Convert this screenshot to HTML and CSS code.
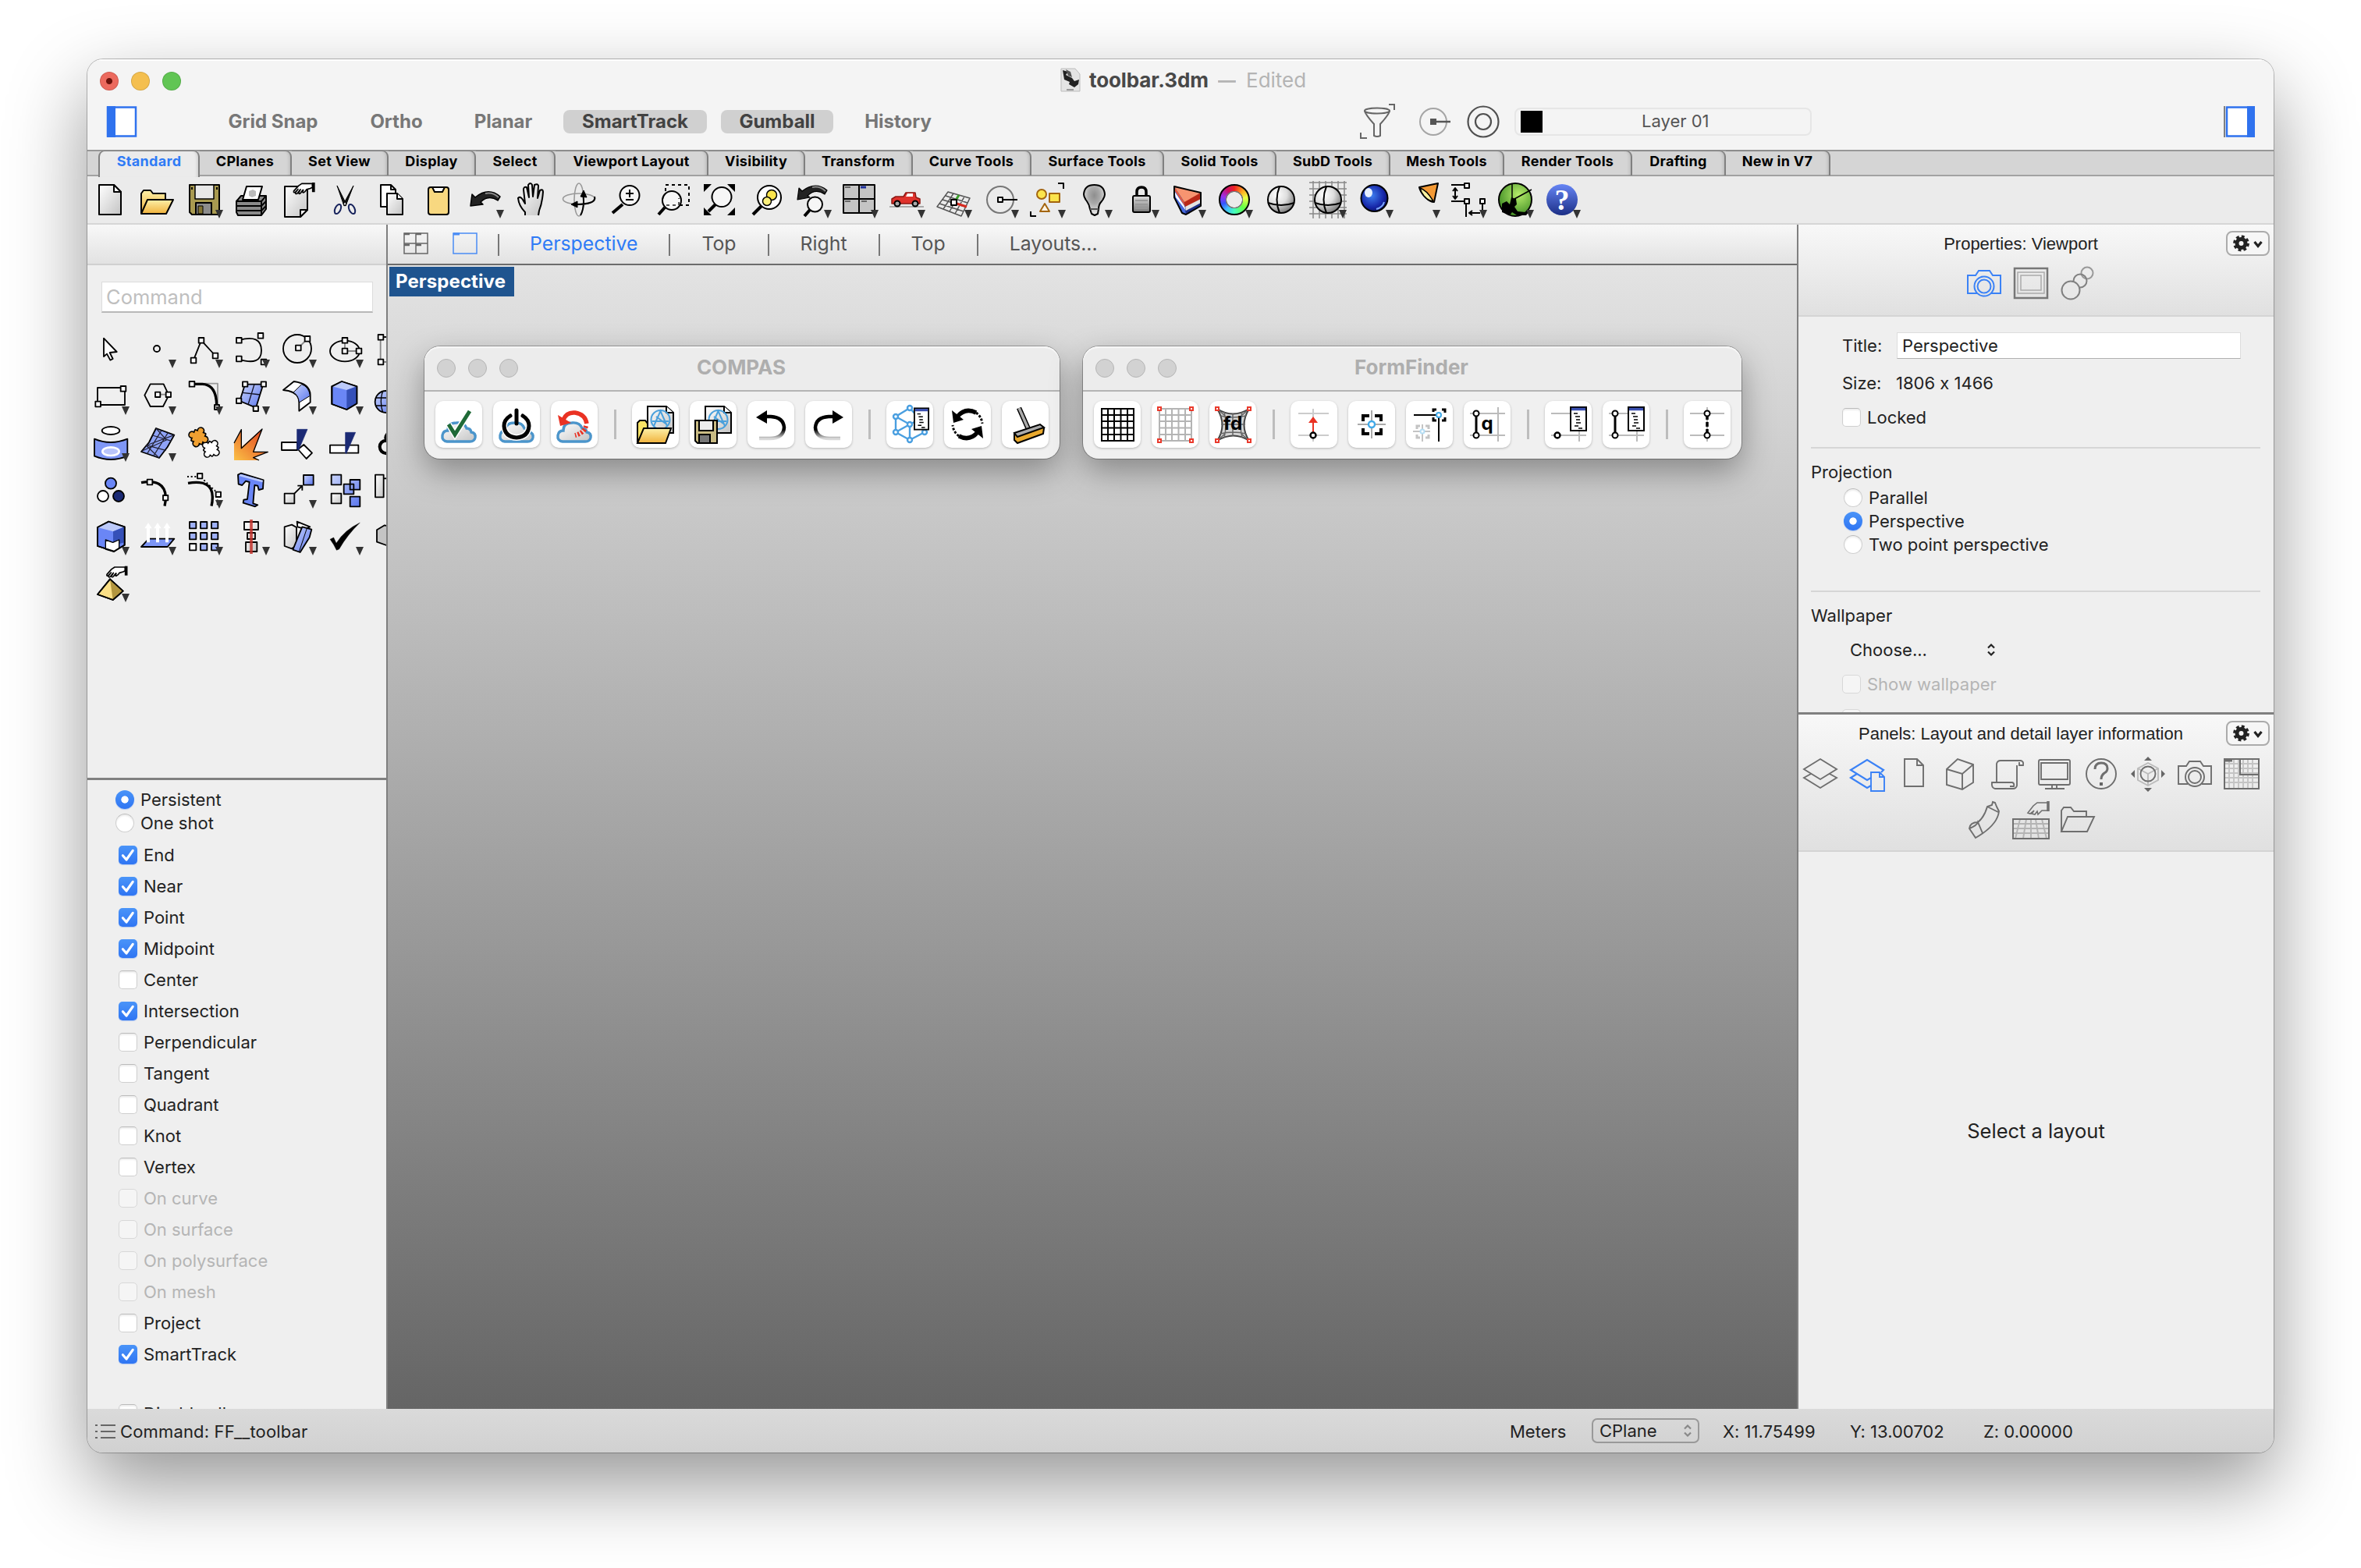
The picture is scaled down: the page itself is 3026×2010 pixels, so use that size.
FILE: index.html
```html
<!DOCTYPE html>
<html lang="en">
<head>
<meta charset="utf-8">
<title>toolbar.3dm</title>
<link rel="stylesheet" href="styles.css">
</head>
<body>
<svg class="defs" width="0" height="0" aria-hidden="true">
  <defs>
    <linearGradient id="paper" x1="0" y1="0" x2="1" y2="1"><stop offset="0" stop-color="#fff"/><stop offset="1" stop-color="#c4c4c4"/></linearGradient>
    <linearGradient id="gold" x1="0" y1="0" x2="0" y2="1"><stop offset="0" stop-color="#fdf0a8"/><stop offset="1" stop-color="#f0b23c"/></linearGradient>
    <linearGradient id="blue" x1="0" y1="0" x2="1" y2="1"><stop offset="0" stop-color="#c9d4fb"/><stop offset="1" stop-color="#5a76ee"/></linearGradient>
    <linearGradient id="fire" x1="1" y1="0" x2="0" y2="1"><stop offset="0" stop-color="#e03a1e"/><stop offset="1" stop-color="#fbc146"/></linearGradient>
    <linearGradient id="steel" x1="0" y1="0" x2="0" y2="1"><stop offset="0" stop-color="#ddd"/><stop offset="1" stop-color="#777"/></linearGradient>
    <linearGradient id="helpfill" x1="0" y1="0" x2="0" y2="1"><stop offset="0" stop-color="#6685f5"/><stop offset="1" stop-color="#1c2f86"/></linearGradient>
    <linearGradient id="fade" x1="0" y1="0" x2="0" y2="1"><stop offset=".6" stop-color="#000"/><stop offset="1" stop-color="#000" stop-opacity=".15"/></linearGradient>
    <radialGradient id="ball" cx=".35" cy=".3" r=".75"><stop offset="0" stop-color="#fff"/><stop offset=".5" stop-color="#ddd"/><stop offset="1" stop-color="#777"/></radialGradient>
    <radialGradient id="bulb" cx=".5" cy=".35" r=".6"><stop offset="0" stop-color="#8e8e8e"/><stop offset=".45" stop-color="#a9a9a9"/><stop offset="1" stop-color="#e8e8e8"/></radialGradient>
    <radialGradient id="blueball" cx=".4" cy=".4" r=".65"><stop offset="0" stop-color="#3f7ff0"/><stop offset=".7" stop-color="#1626a8"/><stop offset="1" stop-color="#0b1263"/></radialGradient>
    <radialGradient id="greenball" cx=".6" cy=".35" r=".7"><stop offset="0" stop-color="#b6ec6a"/><stop offset="1" stop-color="#3c8a22"/></radialGradient>
    <symbol id="check" viewBox="0 0 24 24"><path d="M5.4 12.8 10 18 18.2 6.4" fill="none" stroke="#fff" stroke-width="3.2" stroke-linecap="round" stroke-linejoin="round"/></symbol>
    <symbol id="gear" viewBox="2 2 52 28"><g fill="none" stroke="#222"><circle cx="19.500" cy="16" r="5.500" stroke-width="5"/><circle cx="19.500" cy="16" r="8.400" stroke-width="4" stroke-dasharray="3.700 2.900"/><path d="m36.500 14 4.500 5.500 4.500-5.500" stroke-width="3.200"/></g></symbol>
    <symbol id="updown" viewBox="0 0 12 18"><path d="m2 6.500 4-4 4 4m-8 5 4 4 4-4" fill="none" stroke="currentColor" stroke-width="2.200"/></symbol>
    <symbol id="hand" viewBox="0 0 84 44" overflow="visible"><path d="M74 4 34 4 22 12 4 32q-2 8 6 4l10-11-10 13q0 7 7 3l12-15-7 13q2 6 7 1l9-12 2 0q-6 10 0 10 8-4 12-12l14-4 8-4V4z" fill="#fff" stroke="#000" stroke-width="5" stroke-linejoin="round"/><path d="M78 0v36" stroke="#000" stroke-width="11"/></symbol>
    <symbol id="cloud" viewBox="0 0 46 28" overflow="visible"><path d="M8 26Q1 25 2 18 3 12 9 12 9 2 20 2 30 1 33 9q5 0 6 5 6 1 5 7-1 5-7 5z" fill="url(#paper)" stroke="#4b95cb" stroke-width="3.400"/></symbol>
    <symbol id="sheet" viewBox="0 0 36 36" overflow="visible"><path d="M1 1h24l9 8v26H1z" fill="url(#paper)" stroke="#000" stroke-width="2"/><path d="M25 1v8h9" fill="#fff" stroke="#000" stroke-width="2"/><g fill="none" stroke="#4aa0dc" stroke-width="2"><circle cx="17.500" cy="18" r="12"/><path d="M9 26l8.500-19L26 26M7 20h21M12 14l12 9"/></g></symbol>
    <symbol id="list" viewBox="0 0 22 32" overflow="visible"><rect x="1" y="1" width="20" height="30" fill="#fff" stroke="#000" stroke-width="2"/><path d="M2 3.500h18" stroke="#3a4fb0" stroke-width="3.500"/><path d="M5 9h5M7 13h6M8 17h5M8 21h6M6 25h5M11 28h5" stroke="#000" stroke-width="1.600"/></symbol>
    <symbol id="camera" viewBox="0 0 44 36"><g fill="none" stroke="currentColor" stroke-width="2"><path d="M13 31H1V8h10l4-6h14l4 6h10v23H31"/><circle cx="22" cy="22" r="12.500"/><circle cx="22" cy="22" r="8.500"/></g></symbol>
    <g id="jigsaw"><rect x="-20" y="-20" width="40" height="40"/><circle cx="0" cy="-26" r="10"/><circle cx="-26" cy="0" r="10"/><circle cx="0" cy="26" r="10"/><circle cx="26" cy="0" r="10"/></g>
  </defs>
</svg>

<div class="window">
  <header class="titlebar">
    <div class="titlerow">
      <div class="lights"><i class="red"></i><i class="amber"></i><i class="green"></i></div>
      <div class="doctitle">
        <svg width="26" height="31" viewBox="0 0 26 31"><path d="M1 1h18l6 7v22H1z" fill="#e4e4e4" stroke="#bbb"/><path d="M3 3l7 2-3 4 8 4 3 4 6-2-1 6-5 4-7-4 1-3-7-3z" fill="#222"/><path d="M7 2l3 8 5 2-2-7z" fill="#555"/><path d="M8 28h9" stroke="#999" stroke-width="2"/></svg>
        <b>toolbar.3dm</b><span class="dash">—</span><span class="edited">Edited</span>
      </div>
    </div>
    <div class="modes">
      <svg class="side" width="40" height="40"><path d="M2 1.500h36v37H2z" fill="#fff" stroke="#2f72ee" stroke-width="2.500"/><path d="M1 0h11v40H1z" fill="#2f72ee"/></svg>
      <nav class="modebtns"><span>Grid Snap</span><span>Ortho</span><span>Planar</span><span class="on">SmartTrack</span><span class="on">Gumball</span><span>History</span></nav>
      <div class="filters">
        <svg width="46" height="46" fill="none" stroke="#666" stroke-width="2"><path d="M37 1h7v7M1 37v7h8"/><ellipse cx="22" cy="9" rx="16" ry="3.500"/><path d="M6 9q1 5 12 17v15q4 2 8 0V26Q37 14 38 9"/></svg>
        <svg width="42" height="42" fill="none"><circle cx="19" cy="21" r="17" stroke="#a5a5a5" stroke-width="2"/><path d="M19 21h22" stroke="#555" stroke-width="2.500"/><path d="M15 17h8v8h-8z" fill="#555"/></svg>
        <svg width="42" height="42" fill="none" stroke="#505050" stroke-width="2.200"><circle cx="21" cy="21" r="19.500"/><circle cx="21" cy="21" r="10"/></svg>
      </div>
      <div class="layerbox"><i></i><span>Layer 01</span></div>
      <svg class="side right" width="40" height="40"><path d="M2 1.500h36v37H2z" fill="#fff" stroke="#2f72ee" stroke-width="2.500"/><path d="M28 0h12v40H28z" fill="#2f72ee"/></svg>
    </div>
  </header>

  <nav class="tabs">
    <span class="active">Standard</span><span>CPlanes</span><span>Set View</span><span>Display</span><span>Select</span><span>Viewport Layout</span><span>Visibility</span><span>Transform</span><span>Curve Tools</span><span>Surface Tools</span><span>Solid Tools</span><span>SubD Tools</span><span>Mesh Tools</span><span>Render Tools</span><span>Drafting</span><span>New in V7</span>
  </nav>

  <div class="toolbar">
    <div class="tool"><svg viewBox="0 0 60 60"><path d="M7 9h19l9 9v29H7z" fill="url(#paper)"/><path d="M26 9v9h9z" fill="#fff"/></svg></div>
    <div class="tool"><svg viewBox="0 0 60 60"><path d="M1 45V20l3-4h9l3 4h16v8L20 45z" fill="url(#gold)"/><path d="M9 28h33l-9 18H1z" fill="url(#gold)"/></svg></div>
    <div class="tool menu"><svg viewBox="0 0 60 60"><path d="M3 9h38v38H6l-3-3z" fill="#a89a50"/><path d="M10 9h24v18H10z" fill="#e8e8e8" stroke-width="1.500"/><path d="M11 32h20v15H11z" fill="#8c8c8c"/><path d="M14 36h6v10h-6z" fill="#857634" stroke-width="1"/><path d="M6 12v3M38 12v3"/></svg></div>
    <div class="tool"><svg viewBox="0 0 60 60"><path d="M3 30l6-7h32v17l-6 8H5l-2-4z" fill="#8a8a8a"/><path d="M11 28 16 11h20l-5 17z" fill="#fff"/><path d="M3 30h32l6-7M3 36h32l6-6M3 42h32l6-6M35 30v17"/><path d="M19 17l5-2 4 2v6l-5 2-4-2z" fill="#bbb" stroke="none"/></svg></div>
    <div class="tool"><svg viewBox="0 0 60 60"><path d="M5 11h29v30l-9 9H5z" fill="url(#paper)"/><path d="M25 50v-9h9z" fill="#fff"/><use href="#hand" x="15" y="6" width="29" height="15"/></svg></div>
    <div class="tool"><svg viewBox="0 0 60 60"><path d="M12 10 24 34l-3 2zM33 10 20 34l3 2z" fill="#111" stroke-width="1"/><g stroke="#17235c" stroke-width="2"><ellipse cx="13" cy="40" rx="3.500" ry="6.500" transform="rotate(25 13 40)"/><ellipse cx="31" cy="40" rx="3.500" ry="6.500" transform="rotate(-25 31 40)"/></g></svg></div>
    <div class="tool"><svg viewBox="0 0 60 60"><path d="M8 9h13l6 6v22H8z" fill="#fff"/><path d="M21 9v6h6" /><path d="M16 20h13l7 7v20H16z" fill="url(#paper)"/><path d="M29 20v7h7" fill="#fff"/></svg></div>
    <div class="tool"><svg viewBox="0 0 60 60"><rect x="9" y="12" width="26" height="35" rx="3" fill="#f8d880"/><path d="M14 12h16l-3 6H17z" fill="#fff"/></svg></div>
    <div class="tool menu"><svg viewBox="0 0 60 60"><path d="M3 36 5 21l4 4Q26 11 41 24l-3 5q-12-8-22 2l3 3z" fill="#222" stroke-width="1.500"/><path d="M22 20q10-2 17 5" stroke="#888"/></svg></div>
    <div class="tool"><svg viewBox="0 0 60 60"><path d="M13 48v-4Q5 36 4 26q3-3 6 2l3 5L11 15q0-4 4-3l3 13-1-16q3-4 5 0l1 15 2-15q4-2 5 1l-1 16 3-10q4-2 4 2-1 14-5 24l-1 6" fill="url(#paper)"/></svg></div>
    <div class="tool"><svg viewBox="0 0 60 60"><g stroke-width="1.600"><ellipse cx="22" cy="27" rx="20.500" ry="7" stroke="#999"/><ellipse cx="22" cy="28" rx="6" ry="21" stroke="#999"/></g><path d="M42 24q3 10-25 10M27 20q3 17-3 28"/><path d="M24 24l4-8 4 9zM12 34l8-4v8z" fill="#000" stroke-width="1"/></svg></div>
    <div class="tool"><svg viewBox="0 0 60 60"><path d="M18 34 5 45" stroke-width="4"/><circle cx="27" cy="22.500" r="12.500" fill="#f6f6f6"/><path d="M22 20h10M27 15v10M22 28h10"/></svg></div>
    <div class="tool"><svg viewBox="0 0 60 60"><path d="M13 9h30v26H13z" stroke-dasharray="4 4"/><path d="M12 38 4 47" stroke-width="4"/><circle cx="21" cy="29" r="12" fill="#f6f6f6"/><path d="M14 35h16v-9" stroke-dasharray="4 4" stroke="#555"/></svg></div>
    <div class="tool"><svg viewBox="0 0 60 60"><path d="M2 8h10L2 18zM42 8v10L32 8zM2 48V38l10 10zM42 48H32l10-10z" fill="#000" stroke="none"/><path d="M17 34 8 43" stroke-width="4"/><circle cx="25" cy="24.500" r="12.500" fill="#f6f6f6"/></svg></div>
    <div class="tool"><svg viewBox="0 0 60 60"><path d="M16 36 5 47" stroke-width="4"/><circle cx="26" cy="25" r="15" fill="#fff"/><circle cx="29" cy="22" r="6.500" fill="#fbe44c" stroke-width="1.500"/><circle cx="23" cy="30" r="5.500" fill="#fbf07c" stroke-width="1.500"/></svg></div>
    <div class="tool menu"><svg viewBox="0 0 60 60"><path d="M2 28 4 13l4 4Q25 4 40 16l-3 5q-12-8-22 2l3 2z" fill="#222" stroke-width="1.200"/><path d="M21 12q10-2 17 5" stroke="#888"/><path d="M18 41l-7 8" stroke-width="4"/><circle cx="24.500" cy="34" r="9.500" fill="#f6f6f6"/></svg></div>
    <div class="tool menu"><svg viewBox="0 0 60 60"><path d="M1 9h40v36H1zM21 9v36M1 27h40" fill="#c4c4c4"/><path d="M3 12h7M3 30h7M24 30h7" stroke="#666"/><path d="M23 12h7" stroke="#1d2f9a" stroke-width="3"/></svg></div>
    <div class="tool menu"><svg viewBox="0 0 60 60"><path d="M0 37h44" stroke="#aaa" stroke-width="2"/><path d="M3 33v-6l5-3h10l3-5h12l1 6 5 2v6z" fill="#e0322c" stroke="#8d1813" stroke-width="1.500"/><path d="M21 24l2-4h7v4z" fill="#fff" stroke="none"/><circle cx="10" cy="33" r="3.500" fill="#aaa"/><circle cx="33" cy="33" r="3.500" fill="#aaa"/></svg></div>
    <div class="tool menu"><svg viewBox="0 0 60 60"><g stroke="#555" stroke-width="1.500"><path d="M15 18 43 26 32 49 1 37zM22 20 9 40M29 22 17 43M36 24 24 46M12 23l28 9M8 28l29 9M4 33l31 10"/></g><path d="m23 32 6-10" stroke="#3aa02a" stroke-width="3"/><path d="m23 32 16 5" stroke="#d62a20" stroke-width="3"/><path d="M19 28h7v7h-7z" fill="#fff"/></svg></div>
    <div class="tool menu"><svg viewBox="0 0 60 60"><circle cx="22" cy="28" r="17" stroke="#777"/><path d="M22 28h22"/><path d="M19 25h6v6h-6z" fill="#fff"/></svg></div>
    <div class="tool menu"><svg viewBox="0 0 60 60"><g fill="#fbe44c" stroke="#a3650f"><circle cx="15" cy="21" r="6"/><path d="M25 20h13v11H25z"/><path d="M19 33 25 43H13z" fill="#fff4e4"/></g><path d="M36 7h7v7M1 43v6h7"/></svg></div>
    <div class="tool menu"><svg viewBox="0 0 60 60"><path d="M17 40q-1-6-4-10-4-5-4-9 1-12 13.500-12T36 21q0 4-4 9-4 4-4 10l-1 6-4 2-4-2z" fill="url(#bulb)"/><path d="M17 40h11" stroke="#555"/></svg></div>
    <div class="tool menu"><svg viewBox="0 0 60 60"><path d="M17 24v-6q0-6 6-6t6 6v6" stroke-width="3.500"/><rect x="12" y="23" width="22" height="21" rx="2" fill="url(#steel)"/><path d="M15 29h16M15 34h16M15 39h16" stroke="#999"/></svg></div>
    <div class="tool menu"><svg viewBox="0 0 60 60"><g stroke="none"><path d="M5 11 39 19v17L20 47 15 45 5 25z" fill="#1c2f86"/><path d="M5 11l12 19 3 17-5-2L5 25z" fill="#4468dd"/><path d="M5 17l13 19 2 6L7 25z" fill="#fff"/><path d="M19 36 39 26v6L20 42z" fill="#e4e4e4"/><path d="M17 29 39 19v8L19 37z" fill="#b92818"/><path d="M5 11l12 19 2 7L6 17z" fill="#ea5a38"/><path d="M5 11 39 19 18 31z" fill="#f79470"/></g><path d="M5 11 39 19v17L20 47 15 45 5 25z"/></svg></div>
    <div class="tool menu"><i class="wheel"></i></div>
    <div class="tool"><svg viewBox="0 0 60 60"><circle cx="22" cy="28" r="17" fill="url(#ball)"/><path d="M5 32q17 6 34 0M20 11q-7 17 0 34"/></svg></div>
    <div class="tool menu"><svg viewBox="0 0 60 60"><path d="M-2 6h48M-2 14h48M-2 22h48M-2 30h48M-2 38h48M-2 46h48M3 4v48M11 4v48M19 4v48M27 4v48M35 4v48M43 4v48" stroke="#888" stroke-width="1.500"/><circle cx="22" cy="28" r="17" fill="url(#ball)"/><path d="M5 32q17 6 34 0M20 11q-7 17 0 34"/></svg></div>
    <div class="tool menu"><svg viewBox="0 0 60 60"><circle cx="21.500" cy="26" r="17" fill="url(#blueball)"/><ellipse cx="14" cy="19" rx="5" ry="6" fill="#e6efff" stroke="none"/><path d="M24 40q8-2 10-9" stroke="#7fa8ff"/></svg></div>
    <div class="tool menu"><svg viewBox="0 0 60 60"><path d="M19 12 43 7 38 31q-6 0-13-8-5-6-6-11z" fill="#f49a35"/><path d="M20 13q9 3 17 17-6 0-12-7-4-5-5-10z" fill="#fdf3a0" stroke-width="1.500"/></svg></div>
    <div class="tool menu"><svg viewBox="0 0 60 60"><path d="M0 9h17M0 30h17M19 33v17M40 33v12M5 14v12M24 45h13"/><path d="M17 7h6v6h-6zM17 27h6v6h-6zM37 27h6v6h-6z" fill="#fff"/><path d="M2 17l3-4 3 4M2 23l3 4 3-4M27 42l-4 3 4 3" /></svg></div>
    <div class="tool menu"><svg viewBox="0 0 60 60"><circle cx="22" cy="28" r="21" fill="url(#greenball)"/><path d="M18 7v20M21 27 43 15" stroke-width="1.500"/><path d="M5 44V33l6-3 4 4 2-9 6 2 1 7-3 3 4 6 10 1 3-3 2 2-4 5H24l-6-4-3 4z" fill="#000" stroke="none"/></svg></div>
    <div class="tool menu"><svg viewBox="0 0 60 60"><circle cx="22" cy="28" r="20" fill="url(#helpfill)" stroke="none"/></svg><b class="qmark">?</b></div>
  </div>

  <main class="main">
    <aside class="left">
      <div class="lefthead"></div>
      <section class="palette">
        <div class="cmd">Command</div>
        <div class="tools">
          <div class="tool"><svg viewBox="60 240 180 180"><path d="M99 281v70l12-10 13 24 10-5-12-24 27-3z" fill="#fff"/></svg></div>
          <div class="tool menu"><svg viewBox="240 240 180 180"><circle cx="303" cy="321" r="12"/></svg></div>
          <div class="tool menu"><svg viewBox="420 240 180 180"><path d="M444 365 474 289 528 348"/><path d="M434 356h20v20h-20zM464 279h20v20h-20zM518 338h20v20h-20z" fill="#fff"/></svg></div>
          <div class="tool menu"><svg viewBox="600 240 180 180"><path d="M619 288q86-24 86 40 0 60-86 34"/><path d="M609 279h20v20h-20zM609 350h20v20h-20zM692 261h20v20h-20zM704 362h20v20h-20z" fill="#fff"/></svg></div>
          <div class="tool menu"><svg viewBox="780 240 180 180"><circle cx="843" cy="321" r="54"/><path d="m847 318 35-35" stroke="#888"/><path d="M837 308h20v20h-20zM872 273h20v20h-20z" fill="#fff"/></svg></div>
          <div class="tool menu"><svg viewBox="960 240 180 180"><ellipse cx="1026" cy="330" rx="57" ry="40"/><path d="M1026 290v40h54" stroke="#888"/><path d="M1016 279h20v20h-20zM1016 320h20v20h-20zM1070 320h20v20h-20z" fill="#fff"/></svg></div>
          <div class="tool"><svg viewBox="1140 240 180 180"><path d="M1163 276v96h40" stroke="#888"/><path d="M1163 276h40"/><path d="M1154 267h20v20h-20zM1154 362h20v20h-20z" fill="#fff"/></svg></div>

          <div class="tool menu"><svg viewBox="60 420 180 180"><path d="M75 471h105v66H75z"/><path d="M67 524h20v20H67zM164 465h20v20h-20z" fill="#fff"/></svg></div>
          <div class="tool menu"><svg viewBox="240 420 180 180"><path d="m256 500 22-43h51l20 43-22 43h-49z"/><path d="M306 497h40" stroke="#888"/><path d="M297 488h19v19h-19zM338 488h19v19h-19z" fill="#fff"/></svg></div>
          <div class="tool menu"><svg viewBox="420 420 180 180"><path d="M438 455h99v90" stroke="#999"/><path d="M438 457h40q56 2 55 88" stroke-width="10"/><path d="M428 447h20v20h-20zM525 537h18v18h-18z" fill="#fff"/></svg></div>
          <div class="tool menu"><svg viewBox="600 420 180 180"><path d="m642 458 70 0-28 90-62-26z" fill="url(#blue)"/><path d="m678 458-24 78M632 490l70 8" stroke="#112" stroke-width="4"/><path d="M633 448h19v19h-19zM704 448h19v19h-19zM609 512h19v19h-19zM674 542h19v19h-19z" fill="#fff"/></svg></div>
          <div class="tool menu"><svg viewBox="780 420 180 180"><path d="m789 480 41-33q62 8 63 52v28l-43 33v-34q0-40-61-46z" fill="#fff"/><path d="m828 489 32-31q28 10 32 44l-42 26q-2-28-22-39z" fill="url(#blue)" stroke-width="3"/></svg></div>
          <div class="tool menu"><svg viewBox="960 420 180 180"><path d="m976 466 38-19 58 19v66l-39 23-57-21z" fill="#6a86f6"/><path d="m976 466 38-19 58 19-39 14z" fill="#bccafa" stroke="none"/><path d="m1033 480 39-14v66l-39 23z" fill="#3550b8" stroke="none"/><path d="m976 466 38-19 58 19v66l-39 23-57-21z"/></svg></div>
          <div class="tool"><svg viewBox="1140 420 180 180"><circle cx="1184" cy="525" r="42" fill="url(#blue)"/><path d="M1143 540h80M1146 510h80M1172 484q-14 40 0 82" stroke-width="4"/></svg></div>

          <div class="tool menu"><svg viewBox="60 600 180 180"><ellipse cx="126" cy="636" rx="34" ry="15" fill="#fff"/><path d="M63 668q62 26 127 0v66q-64 26-127 0z" fill="#7f97f6"/><ellipse cx="126" cy="716" rx="32" ry="16" fill="#b9c5fb" stroke="#fff" stroke-width="8"/></svg></div>
          <div class="tool menu"><svg viewBox="240 600 180 180"><path d="m300 627 70 26-26 46-32 42-69-24 30-36z" fill="#8fa3f6"/><path d="m321 635-55 90M346 644l-56 90M286 654l74 22M262 692l76 20M300 627l40 45-95 43M370 653l-108 40 50 48" stroke="#223" stroke-width="3.500"/></svg></div>
          <div class="tool"><svg viewBox="420 600 180 180"><use href="#jigsaw" transform="translate(511 706) rotate(35) scale(.95)" fill="#000" stroke-width="10"/><use href="#jigsaw" transform="translate(511 706) rotate(35) scale(.95)" fill="#fff" stroke="none"/><use href="#jigsaw" transform="translate(463 661) rotate(20)" fill="#000" stroke-width="10"/><use href="#jigsaw" transform="translate(463 661) rotate(20)" fill="#f0a031" stroke="none"/></svg></div>
          <div class="tool"><svg viewBox="600 600 180 180"><path d="M600 684 628 632v68l80-70-32 86 54 2-54 20 20 12h-96z" fill="url(#fire)" stroke="none"/><path d="M600 684 628 632v72l80-74-34 88 56 0-56 22 22 10" stroke-width="4"/></svg></div>
          <div class="tool"><svg viewBox="780 600 180 180"><path d="M783 681h60v30h-60zM846 708l22-18 32 32-22 22z" fill="#fff"/><path d="M842 631h40l-34 80-6-4z" fill="#1b2a75" stroke="#1b2a75" stroke-width="2"/></svg></div>
          <div class="tool"><svg viewBox="960 600 180 180"><path d="M969 692h109v30H969z" fill="#fff"/><path d="M1028 643h39l-36 82-3-3z" fill="#1b2a75" stroke="#1b2a75" stroke-width="2"/></svg></div>
          <div class="tool"><svg viewBox="1140 600 180 180"><path d="M1190 648q-14 16 0 30M1190 674q-28 0-30 24 2 26 30 26" stroke-width="12"/></svg></div>

          <div class="tool"><svg viewBox="60 780 180 180"><circle cx="126" cy="839" r="21" fill="#6a86f6"/><circle cx="96" cy="888" r="21" fill="#fff"/><circle cx="156" cy="888" r="21" fill="#1b2a75"/></svg></div>
          <div class="tool"><svg viewBox="240 780 180 180"><path d="M243 836q90-16 94 54 0 20-4 36" stroke-width="10"/><path d="M266 824h20v20h-20zM327 885h19v19h-19z" fill="#fff"/></svg></div>
          <div class="tool menu"><svg viewBox="420 780 180 180"><path d="M423 838q96-16 94 56 0 16-4 32" stroke-width="10"/><path d="M420 813h36M484 826l52 50v50" stroke-dasharray="6 8"/><path d="M459 801h19v19h-19zM530 872h19v19h-19z" fill="#fff"/></svg></div>
          <div class="tool"><svg viewBox="600 780 180 180"><path d="m615 806 12-6 86 26-2 34-16 4-4-16-12-2-6 70 18 6-10 6-46-14 2-12 14-2 8-66-14-4-14 16-14-4z" fill="#6a86f6"/><path d="m622 807 88 24" stroke="#bccafa" stroke-width="8"/></svg></div>
          <div class="tool menu"><svg viewBox="780 780 180 180"><path d="m832 878 28-28M844 848h18v18"/><path d="M794 878h38v38h-38z" fill="url(#paper)"/><path d="M867 807h38v38h-38z" fill="url(#blue)"/></svg></div>
          <div class="tool"><svg viewBox="960 780 180 180"><path d="M974 806h38v38h-38zM1046 825h38v38h-38zM1022 842h38v38h-38zM1046 890h38v38h-38z" fill="url(#blue)"/><path d="M974 878h38v38h-38z" fill="url(#paper)"/></svg></div>
          <div class="tool"><svg viewBox="1140 780 180 180"><path d="M1143 806h32v86h-32z" fill="url(#paper)"/><path d="M1176 820h30"/></svg></div>

          <div class="tool menu"><svg viewBox="60 960 180 180"><path d="m75 1008 43-22 61 20v70l-41 24-63-20z" fill="#6a86f6"/><path d="m75 1008 43-22 61 20-44 18z" fill="#bccafa" stroke="none"/><path d="m135 1024 44-18v60l-44 12z" fill="#3550b8" stroke="none"/><path d="m106 1056 28 10 24-10v32l-20 14-32-10z" fill="#fff" stroke-width="4"/><path d="m75 1008 43-22 61 20v70l-41 24-63-20z"/></svg></div>
          <div class="tool menu"><svg viewBox="240 960 180 180"><path d="m272 1052 98 0-26 31-101 0z" fill="#7c95f6"/><path d="M270 1066v-66M306 1066v-66M342 1066v-66" stroke="#fff" stroke-width="12"/><path d="m270 990 14 22h-28zM306 990l14 22h-28zM342 990l14 22h-28z" fill="#fff" stroke="none"/></svg></div>
          <div class="tool menu"><svg viewBox="420 960 180 180"><path d="M429 987h25v25h-25zM471 987h25v25h-25zM513 987h25v25h-25zM429 1029h25v25h-25zM471 1029h25v25h-25zM513 1029h25v25h-25zM471 1071h25v25h-25zM513 1071h25v25h-25z" fill="#9fb1f8"/><path d="M429 1071h25v25h-25z" fill="#fff"/></svg></div>
          <div class="tool menu"><svg viewBox="600 960 180 180"><path d="M639 987h54v30h-54zM651 1029h30v24h-30zM645 1065h43v36h-43z" fill="url(#paper)"/><path d="M666 978v132" stroke="#c4322c" stroke-opacity=".85" stroke-width="11"/></svg></div>
          <div class="tool menu"><svg viewBox="780 960 180 180"><path d="m794 1006 28-8 18 10v70l-18 12-28-10z" fill="url(#paper)"/><path d="m842 986 50 20-20 8-28-8z" fill="#fff"/><path d="m862 1006 36 10-8 30-36 58-28-10z" fill="url(#blue)"/><path d="m880 1012-30 90" stroke-width="3"/></svg></div>
          <div class="tool menu"><svg viewBox="960 960 180 180"><path d="m969 1054 14-7 10 22q30-50 91-79-48 46-80 102l-10 4q-10-22-25-42z" fill="#000" stroke-width="1"/></svg></div>
          <div class="tool"><svg viewBox="1140 960 180 180"><path d="m1149 1018 30-18 40 10v50l-30 18-40-14z" fill="#c4c4c4"/></svg></div>

          <div class="tool menu"><svg viewBox="60 1140 180 180"><use href="#hand" x="107" y="1157" width="84" height="44"/><path d="m75 1266 48-59 50 46-39 34z" fill="#fadf86"/><path d="m123 1207 50 46-39 34z" fill="#b3963f" stroke="none"/><path d="m75 1266 48-59 50 46-39 34z"/></svg></div>
        </div>
      </section>
      <section class="osnap">
        <label class="radio"><i class="rb on"></i>Persistent</label>
        <label class="radio"><i class="rb"></i>One shot</label>
        <div class="snaps">
          <label><i class="cb on"><svg><use href="#check"/></svg></i>End</label>
          <label><i class="cb on"><svg><use href="#check"/></svg></i>Near</label>
          <label><i class="cb on"><svg><use href="#check"/></svg></i>Point</label>
          <label><i class="cb on"><svg><use href="#check"/></svg></i>Midpoint</label>
          <label><i class="cb"></i>Center</label>
          <label><i class="cb on"><svg><use href="#check"/></svg></i>Intersection</label>
          <label><i class="cb"></i>Perpendicular</label>
          <label><i class="cb"></i>Tangent</label>
          <label><i class="cb"></i>Quadrant</label>
          <label><i class="cb"></i>Knot</label>
          <label><i class="cb"></i>Vertex</label>
          <label class="off"><i class="cb"></i>On curve</label>
          <label class="off"><i class="cb"></i>On surface</label>
          <label class="off"><i class="cb"></i>On polysurface</label>
          <label class="off"><i class="cb"></i>On mesh</label>
          <label><i class="cb"></i>Project</label>
          <label><i class="cb on"><svg><use href="#check"/></svg></i>SmartTrack</label>
          <label class="last"><i class="cb"></i>Disable all</label>
        </div>
      </section>
    </aside>

    <section class="center">
      <nav class="views">
        <svg width="32" height="28" fill="none" stroke="#666" stroke-width="1.500"><path d="M1 1h30v26H1zM16 1v26M1 14h30"/><path d="M1 2h7M16 2h7M1 16h7M16 16h7" stroke-width="2.500"/></svg>
        <svg width="32" height="28" fill="none" stroke="#4a8cf5" stroke-width="1.500"><path d="M1 1h30v26H1z"/><path d="M1 2h8" stroke-width="3"/></svg>
        <i></i><span class="cur">Perspective</span><i></i><span>Top</span><i></i><span>Right</span><i></i><span>Top</span><i></i><span>Layouts...</span>
      </nav>
      <div class="viewport">
        <div class="vplabel">Perspective</div>

        <div class="float compas">
          <div class="fhead"><div class="lights dim"><i></i><i></i><i></i></div><b>COMPAS</b></div>
          <div class="fbody">
            <div class="fb"><svg viewBox="0 0 60 60"><use href="#cloud" x="7" y="26" width="46" height="28"/><path d="M17 30l8 13L44 13" stroke="#fff" stroke-width="8"/><path d="M17 30l8 13L44 13" stroke="#1f6a37" stroke-width="5"/></svg></div>
            <div class="fb"><svg viewBox="0 0 60 60"><use href="#cloud" x="7" y="26" width="46" height="28"/><g stroke="#fff" stroke-width="8"><path d="M22 19q-8 5-8 13 1 14 16 15 15-1 16-15 0-8-8-13"/></g><path d="M22 19q-8 5-8 13 1 14 16 15 15-1 16-15 0-8-8-13M30 12v17" stroke-width="5" stroke-linecap="round"/></svg></div>
            <div class="fb"><svg viewBox="0 0 60 60"><use href="#cloud" x="7" y="26" width="46" height="28"/><path d="M15 25q4-11 17-10 13 2 14 14" stroke="#fff" stroke-width="9"/><path d="M16 24q4-10 15-9 13 2 15 14" stroke="#ea3223" stroke-width="5.500"/><path d="M9 18l3 14 14-4z" fill="#ea3223" stroke="none"/><path d="M45 32q-2 9-14 12" stroke="#ea3223" stroke-width="6" stroke-dasharray="2.500 2"/></svg></div>
            <i class="sep"></i>
            <div class="fb"><svg viewBox="0 0 60 60"><path d="M7 53V28l3-3h7l3 4h12v8L18 53z" fill="#fbe465"/><use href="#sheet" x="19" y="6" width="36" height="36"/><path d="M15 35h35l-7 19H7z" fill="url(#gold)"/></svg></div>
            <div class="fb"><svg viewBox="0 0 60 60"><use href="#sheet" x="19" y="6" width="36" height="36"/><path d="M7 25h28v29H10l-3-3z" fill="#c9bb83"/><path d="M12 25h18v13H12z" fill="#eee"/><path d="M12 43h14v11H12z" fill="#777"/></svg></div>
            <div class="fb"><svg viewBox="0 0 60 60"><path d="M22 20h8q16 1 17 14-1 14-18 14H15" stroke="url(#fade)" stroke-width="4.500"/><path d="M11 21 25 12v17z" fill="#000" stroke="none"/></svg></div>
            <div class="fb"><svg viewBox="0 0 60 60"><path d="M38 20h-8Q14 21 13 34q1 14 18 14h14" stroke="url(#fade)" stroke-width="4.500"/><path d="M49 21 35 12v17z" fill="#000" stroke="none"/></svg></div>
            <i class="sep"></i>
            <div class="fb"><svg viewBox="0 0 60 60"><g stroke="#4a9fe0" stroke-width="2.400" fill="#fff"><path d="M30 9 12 20v20l18 10 19-10V30L30 9M12 20l18 10 19-10M12 40l18-10v20" fill="none"/><circle cx="30" cy="9" r="3"/><circle cx="12" cy="20" r="3"/><circle cx="12" cy="40" r="3"/><circle cx="30" cy="50" r="3"/><circle cx="49" cy="40" r="3"/><circle cx="30" cy="30" r="3"/></g><use href="#list" x="35" y="8" width="20" height="30"/></svg></div>
            <div class="fb"><svg viewBox="0 0 60 60"><path d="M17 20q10-12 24-5M43 40q-10 12-24 5" stroke-width="5.500"/><path d="M41 15q7 5 8 14M19 45q-7-5-8-14" stroke-width="3" stroke-dasharray="3 2"/><path d="M10 12l2 16 13-4zM50 48l-2-16-13 4z" fill="#000" stroke="none"/></svg></div>
            <div class="fb"><svg viewBox="0 0 60 60"><path d="M22 9 34 36" stroke-width="6.500"/><path d="M22 9 34 36" stroke="#aaa" stroke-width="3.500"/><path d="M16 42l33-11 5 4-1 7-33 12-4-4z" fill="#e9a92e"/><path d="M16 41l33-11 5 4-34 12z" fill="#aaa"/></svg></div>
          </div>
        </div>

        <div class="float former">
          <div class="fhead"><div class="lights dim"><i></i><i></i><i></i></div><b>FormFinder</b></div>
          <div class="fbody">
            <div class="fb"><svg viewBox="0 0 60 60"><path d="M10 10h41v41H10zM18 10v41M26 10v41M34.500 10v41M43 10v41M10 18h41M10 26h41M10 34.500h41M10 43h41"/></svg></div>
            <div class="fb"><svg viewBox="0 0 60 60"><path d="M10 10h41v41H10zM18 10v41M26 10v41M34.500 10v41M43 10v41M10 18h41M10 26h41M10 34.500h41M10 43h41" stroke="#b4b4b4"/><path d="M8 8h4v4H8zM49 8h4v4h-4zM8 49h4v4H8zM49 49h4v4h-4z" fill="#fff" stroke="#ea3a2c"/></svg></div>
            <div class="fb"><svg viewBox="0 0 60 60"><path d="M10 10q20 13 41 0-13 21 0 41-20-13-41 0 13-20 0-41z" fill="#d5d5d5" stroke="#444"/><path d="M19 14q4 16 0 33M30 16v29M42 14q-4 16 0 33M14 19q16 4 33 0M15 30h31M14 42q16-4 33 0M10 10l10 9M51 10l-10 9M10 51l10-9M51 51l-10-9" stroke="#666" stroke-width="1.500"/><path d="M8 8h4v4H8zM49 8h4v4h-4zM8 49h4v4H8zM49 49h4v4h-4z" fill="#fff" stroke="#ea3a2c"/></svg><b class="glyph">fd</b></div>
            <i class="sep"></i>
            <div class="fb"><svg viewBox="0 0 60 60"><path d="M10 16h39M10 44h39M29 10v42" stroke="#ccc"/><path d="M29 40V24" stroke="#ea3223"/><path d="M29 20l6 8H23z" fill="#ea3223" stroke="none"/><circle cx="29" cy="44" r="3.500" fill="#fff" stroke-width="2.400"/></svg></div>
            <div class="fb"><svg viewBox="0 0 60 60"><path d="M12 30h36M30 12v36" stroke="#aaa"/><path d="M19 26v-7h8M34 19h8v7M42 35v7h-8M27 42h-8v-7" stroke-width="4" stroke-linejoin="miter"/><circle cx="30" cy="30" r="4" fill="#fff" stroke="#3fa9e8" stroke-width="2.400"/></svg></div>
            <div class="fb"><svg viewBox="0 0 60 60"><path d="M10 18h32v34"/><path d="M35 14v-3h4M46 11h4v4M50 21v4h-4M39 25h-4v-4" stroke-width="3"/><circle cx="42" cy="18" r="3" fill="#fff" stroke="#3fa9e8"/><g stroke="#c4c4c4"><path d="M9 39h22M21 30v22"/><path d="M14 36v-4h4M25 32h4v4M29 43v4h-4M18 47h-4v-4" stroke-width="3"/></g><circle cx="21" cy="39" r="2.500" fill="#fff" stroke="#b5def5"/></svg></div>
            <div class="fb"><svg viewBox="0 0 60 60"><path d="M8 16h45M8 44h45M44 8v44" stroke="#bbb"/><path d="M16 16v28" stroke-width="3"/><circle cx="16" cy="16" r="3.500" fill="#fff"/><circle cx="16" cy="44" r="3.500" fill="#fff"/></svg><b class="glyph">q</b></div>
            <i class="sep"></i>
            <div class="fb"><svg viewBox="0 0 60 60"><path d="M8 16h45M8 44h45M44 8v44" stroke="#bbb"/><circle cx="16" cy="44" r="3.500" fill="#fff" stroke-width="2.400"/><use href="#list" x="32" y="7" width="22" height="32"/></svg></div>
            <div class="fb"><svg viewBox="0 0 60 60"><path d="M8 16h45M8 44h45M44 8v44" stroke="#bbb"/><path d="M16 16v28" stroke-width="3"/><circle cx="16" cy="16" r="3.500" fill="#fff"/><circle cx="16" cy="44" r="3.500" fill="#fff"/><use href="#list" x="32" y="7" width="22" height="32"/></svg></div>
            <i class="sep"></i>
            <div class="fb"><svg viewBox="0 0 60 60"><path d="M8 16h44M8 44h44M30 8v44" stroke="#bbb"/><path d="M30 18v26" stroke-width="3.500" stroke-dasharray="6 3"/><circle cx="30" cy="16" r="3.500" fill="#fff"/><circle cx="30" cy="44" r="3.500" fill="#fff"/></svg></div>
          </div>
        </div>
      </div>
    </section>

    <aside class="right">
      <section class="props">
        <div class="phead">
          <div class="ptitle"><span>Properties: Viewport</span><svg class="gearbtn"><use href="#gear"/></svg></div>
          <div class="picons first">
            <svg class="cam blue" width="44" height="36"><use href="#camera"/></svg>
            <svg width="46" height="42" fill="none"><path d="M2 2h42v38H2z" stroke="#777" stroke-width="2.500"/><path d="M6 7h34v27H6zM10 11h26v19H10z" stroke="#aaa" stroke-width="1.500"/></svg>
            <svg width="44" height="44" fill="none" stroke="#808080" stroke-width="2"><circle cx="34" cy="9" r="7.500" stroke="#999"/><circle cx="25" cy="19" r="8.500"/><circle cx="13" cy="31" r="11.500" fill="#e8e8e8"/></svg>
          </div>
        </div>
        <div class="form">
          <div class="frow title"><span class="lab">Title:</span><div class="field">Perspective</div></div>
          <div class="frow size"><span class="lab">Size:</span><span>1806 x 1466</span></div>
          <label class="locked"><i class="cb"></i>Locked</label>
          <hr>
          <h3>Projection</h3>
          <label class="radio"><i class="rb"></i>Parallel</label>
          <label class="radio"><i class="rb on"></i>Perspective</label>
          <label class="radio"><i class="rb"></i>Two point perspective</label>
          <hr class="second">
          <h3>Wallpaper</h3>
          <div class="choose"><span>Choose...</span><svg width="12" height="18"><use href="#updown"/></svg></div>
          <label class="off show"><i class="cb"></i>Show wallpaper</label>
          <label class="off show2"><i class="cb"></i>Show wallpaper as gray scale</label>
        </div>
      </section>
      <section class="panels">
        <div class="phead">
          <div class="ptitle"><span>Panels: Layout and detail layer information</span><svg class="gearbtn"><use href="#gear"/></svg></div>
          <div class="picons">
            <svg class="pi"><path d="M24 3 45 16 24 29 3 16zM12 22 3 27 24 40 45 27 36 22"/></svg>
            <svg class="pi blue"><path d="M29 27 24 30 3 17 24 4 45 17l-3 3M11 22 3 27 24 40l5-3" stroke-width="2.200"/><path d="M29 20h11l6 6v18H29zM40 20v6h6"/></svg>
            <svg class="pi"><path d="M12 3h16l8 8v27H12zM28 3v8h8"/></svg>
            <svg class="pi"><path d="M6 16 20 3 40 10v23L26 42 6 36zM6 16l20 6 14-12M26 22v20"/></svg>
            <svg class="pi"><path d="M10 33V9q1-4 5-4h26q4 1 3 6h-5V7M36 11v26q-1 4-5 4H8q-5-1-4-8h26q3 1 2 5h-5"/></svg>
            <svg class="pi"><rect x="4" y="4" width="40" height="32" rx="2"/><path d="M7 8h34v21H7zM21 36v5M27 36v5M12 41h25"/></svg>
            <svg class="pi"><circle cx="24" cy="22" r="19"/><path d="M16 16q0-8 8-8t8 7q0 4-4 6-4 3-4 8" stroke-width="3"/><path d="M22 33h4v4h-4z" fill="#666" stroke="none"/></svg>
            <svg class="pi"><path d="M24 8 37 15v15L24 37 11 30V15zM11 15l13 7 13-7M24 22v15" stroke="#bbb"/><circle cx="24" cy="22" r="9.500"/><path d="M24 0l5 5H19zM24 45l5-5H19zM2 22l5-5v10zM46 22l-5-5v10z" fill="#666" stroke="none"/></svg>
            <svg class="pi" viewBox="-2 -3 48 48"><g transform="translate(0 1)"><path d="M13 31H1V8h10l4-6h14l4 6h10v23H31"/><circle cx="22" cy="22" r="12"/><circle cx="22" cy="22" r="8"/></g></svg>
            <svg class="pi"><path d="M8 3v38M14 3v38M20 3v38M26 3v38M32 3v38M38 3v38M2 9h44M2 15h44M2 21h44M2 27h44M2 33h44" stroke="#c4c4c4"/><path d="M2 3h44v38H2zM22 3v20h24" stroke-width="2"/><path d="M3 5h9" stroke-width="3"/></svg>
          </div>
          <div class="picons row2">
            <svg class="pi"><path d="M38 3l-3-1-1 4-6 2Q24 22 16 28q-10 0-11 8l8 12q28-16 30-34l-3-6zM28 8l14 7M5 36q10-4 11-8l6 14" /></svg>
            <svg class="pi"><path d="M1 24h46v25H1zM10 24 4 49M18 24l-4 25M24 24v25M30 24l4 25M38 24l6 25M1 30h46M1 36h46M1 42h46" stroke="#b4b4b4"/><path d="M1 24h46v25H1z"/><path d="M45 3H32l-5 4-7 9 3 1 5-4-3 4 4 1 3-4 1 4 5-5h7" stroke-width="1.600"/><path d="M46 1v13" stroke-width="3.500"/></svg>
            <svg class="pi"><path d="M3 40V13l3-4h9l4 5h16v7M3 40l8-19h34l-9 19z"/></svg>
          </div>
        </div>
        <div class="empty">Select a layout</div>
      </section>
    </aside>
  </main>

  <footer class="status">
    <svg width="26" height="20" fill="none" stroke="#666" stroke-width="2"><path d="M7 2h19M7 10h19M7 18h19M0 2h3M0 10h3M0 18h3"/></svg>
    <span class="cmdline">Command: FF__toolbar</span>
    <span class="units">Meters</span>
    <div class="popup"><span>CPlane</span><svg width="12" height="18"><use href="#updown"/></svg></div>
    <span class="coord">X: 11.75499</span><span class="coord">Y: 13.00702</span><span class="coord">Z: 0.00000</span>
  </footer>
</div>
</body>
</html>
```

FILE: styles.css
```css
* { box-sizing: border-box; }
body {
  margin: 0; width: 3026px; height: 2010px; padding: 76px 112px;
  background: #fff; overflow: hidden;
  font: 22px/30px Inter, "Liberation Sans", sans-serif; color: #222;
  font-feature-settings: "calt" 0;
}
i, b { font-style: normal; }
svg { display: block; flex: none; }
.defs { position: absolute; }
.window {
  width: 2802px; height: 1786px; border-radius: 20px; overflow: hidden;
  display: grid; grid-template-rows: 116px 34px 62px 1518px 56px;
  background: #efefef;
  box-shadow: 0 0 0 1px rgba(0,0,0,.25), 0 40px 100px rgba(0,0,0,.42);
}

/* Title bar */
.titlebar { background: #f4f4f4; box-shadow: inset 0 2px 0 #fdfdfd; }
.titlerow { height: 56px; display: flex; align-items: center; padding-left: 16px; }
.lights { display: flex; gap: 16px; }
.lights i { width: 24px; height: 24px; border-radius: 50%; border: 1px solid rgba(0,0,0,.12); }
.lights .red { background: radial-gradient(circle, #6b120b 0 3.500px, #ec6a5e 4.500px); }
.lights .amber { background: #f4bf4f; }
.lights .green { background: #61c554; }
.doctitle { display: flex; align-items: center; margin-left: 1127px; margin-top: -2px; font-size: 26px; color: #484848; }
.doctitle svg { margin-top: -2px; }
.doctitle b { margin-left: 11px; width: 156px; letter-spacing: -.1px; font-weight: 700; white-space: nowrap; }
.doctitle .dash { margin-left: 9px; width: 36px; color: #b4b4b4; font-weight: 600; letter-spacing: -2px; transform-origin: 0 50%; transform: scaleX(.88); }
.doctitle .edited { color: #b4b4b4; }
.modes { height: 48px; display: flex; align-items: center; padding: 0 24px; }
.modebtns { display: grid; grid-template-columns: 160px 120px 118px 184px 144px 130px; gap: 18px; margin-left: 94px; }
.modebtns span { height: 30px; line-height: 29px; text-align: center; font-size: 24px; font-weight: 700; color: #777; border-radius: 8px; white-space: nowrap; }
.modebtns .on { background: #d0d0d0; color: #424242; }
.filters { display: flex; align-items: center; margin-left: 527px; gap: 20px; }
.filters svg + svg { margin-left: 9px; }
.filters svg + svg + svg { margin-left: 0; }
.layerbox { margin-left: 19px; width: 381px; height: 36px; border: 2px solid #e6e6e6; border-radius: 8px; display: flex; align-items: center; padding-left: 6px; color: #555; }
.layerbox i { width: 28px; height: 28px; background: #000; }
.layerbox span { margin-left: 127px; margin-top: -2px; }
.side.right { margin-left: auto; }

/* Tool tabs */
.tabs {
  display: grid; padding-left: 14px;
  grid-template-columns: 128px 118px 124px 112px 102px 196px 124px 138px 152px 170px 144px 146px 146px 164px 120px 134px;
  background: #d5d5d5; border-top: 2px solid #979797; border-bottom: 2px solid #a2a2a2;
}
.tabs span {
  height: 32px; margin-top: -1px; position: relative; left: 2px; border-right: 2px solid #808080; border-top: 1px solid #808080;
  border-radius: 0 8px 0 0; text-align: center; box-shadow: inset -4px 0 4px -3px rgba(0,0,0,.15);
  font-size: 18px; line-height: 26px; font-weight: 700; color: #000; white-space: nowrap; letter-spacing: .3px;
}
.tabs .active { color: #2f7bf6; background: #ebebeb; height: 34px; border-left: 2px solid #808080; border-radius: 8px 8px 0 0; left: 0; width: 130px; }

/* Icon toolbar */
.toolbar { display: flex; padding: 2px 0 0 8px; background: #ebebeb; border-bottom: 2px solid #d6d6d6; }
.tool { position: relative; width: 60px; height: 60px; flex: none; }
.tool svg { width: 60px; height: 60px; overflow: visible; fill: none; stroke: #000; stroke-width: 2; stroke-linejoin: round; }
.toolbar .tool { height: 56px; }
.tools .tool svg { stroke-width: 5.500; }
.tool.menu::after {
  content: ""; position: absolute; left: 36px; top: 41px;
  border: 5px solid transparent; border-top: 11px solid #333; border-bottom: 0;
}
.wheel {
  display: block; width: 40px; height: 40px; margin: 8px 0 0 2px; border-radius: 50%; border: 2px solid #000;
  background: radial-gradient(circle, #ebebeb 0 9.500px, #777 10px 11px, transparent 11.500px),
    conic-gradient(#e22, #fa2 45deg, #ef4 80deg, #6f4 130deg, #4fb 180deg, #4bf 220deg, #35f 250deg, #93e 285deg, #c16 325deg, #e22);
}
.qmark { position: absolute; left: 2px; top: 8px; width: 40px; text-align: center; font: 700 38px/41px "Liberation Serif", serif; color: #fff; }

/* Columns */
.main { display: grid; grid-template-columns: 385px 1806px 611px; }
.left { border-right: 2px solid #7f7f7f; display: grid; grid-template-rows: 52px 657px 809px; overflow: hidden; }
.lefthead { background: linear-gradient(#f8f8f8, #e2e2e2); border-bottom: 2px solid #d0d0d0; }
.palette { overflow: hidden; }
.cmd { margin: 21px 17px 0 18px; height: 40px; background: #fff; border: 1px solid #dcdcdc; border-bottom: 2px solid #b8b8b8; padding-left: 5px; font-size: 25.500px; line-height: 38px; color: #bfbfbf; }
.tools { display: grid; grid-template-columns: repeat(7, 60px); margin: 19px 0 0 8px; }
.osnap { border-top: 3px solid #808080; padding: 10px 0 0 36px; overflow: hidden; }
label { display: flex; align-items: center; white-space: nowrap; }
.radio { height: 30px; gap: 8px; }
.snaps { padding: 6px 0 0 4px; }
.snaps label, .locked, .show { height: 40px; gap: 8px; }
.snaps .last { margin-top: 36px; }
.cb, .rb { width: 24px; height: 24px; flex: none; background: #fff; border: 1px solid #cfcfcf; border-top-color: #bbb; box-shadow: inset 0 2px 2px rgba(0,0,0,.07); }
.cb { border-radius: 5px; }
.rb { border-radius: 50%; }
.cb.on, .rb.on { border: 0; box-shadow: 0 1px 1px rgba(47,115,240,.3); background: linear-gradient(#4a94f8, #2f75f3); }
.rb.on { background: radial-gradient(circle, #fff 0 4.300px, transparent 5px), linear-gradient(#4a94f8, #2f75f3); }
.cb svg { width: 24px; height: 24px; }
.off { color: #b5b5b5; }
.off .cb { background: #f5f5f5; border-color: #d8d8d8; box-shadow: none; }

/* Viewport column */
.center { display: grid; grid-template-rows: 52px 1466px; }
.views { display: flex; align-items: center; padding-left: 20px; background: linear-gradient(#f8f8f8, #e2e2e2); border-bottom: 2px solid #6c6c6c; font-size: 24.800px; color: #555; }
.views svg { margin-top: -2px; }
.views svg + svg { margin: -2px 26px 0 31px; }
.views i { width: 2px; height: 28px; background: #777; margin-top: 2px; }
.views span { margin: -3px 40px 0; white-space: nowrap; }
.views .cur { color: #2f7bf6; margin-left: 39px; }
.viewport { position: relative; background: linear-gradient(#e3e3e3, #656565); }
.vplabel { position: absolute; left: 2px; top: 2px; width: 160px; height: 38px; background: #1f548f; color: #fff; font-weight: 700; font-size: 24px; letter-spacing: .1px; line-height: 38px; padding-left: 8px; }

/* Floating tool palettes */
.float { position: absolute; top: 104px; height: 144px; border-radius: 20px; background: #f0f0f0; box-shadow: 0 0 0 1px rgba(0,0,0,.28), 0 16px 40px rgba(0,0,0,.34); }
.compas { left: 47px; width: 814px; }
.former { left: 891px; width: 844px; }
.fhead { position: relative; height: 58px; display: flex; align-items: center; padding-left: 16px; background: #ececec; border-bottom: 2px solid #b4b4b4; border-radius: 20px 20px 0 0; box-shadow: inset 0 2px 1px #f8f8f8; }
.fhead b { position: absolute; left: 0; right: 2px; top: 12px; text-align: center; font-size: 26px; font-weight: 700; color: #aeaeae; }
.dim i { background: #d2d2d2; border: 1px solid #b5b5b5; }
.fbody { display: flex; align-items: center; gap: 14px; padding: 12px 14px 0; }
.fb { position: relative; width: 60px; height: 60px; border-radius: 10px; background: #fff; box-shadow: 0 1px 3px rgba(0,0,0,.25); }
.fb svg { width: 60px; height: 60px; fill: none; stroke: #000; stroke-width: 2; }
.sep { width: 16px; height: 38px; background: linear-gradient(#bdbdbd, #bdbdbd) center / 3px 100% no-repeat; }
.glyph { position: absolute; left: 0; top: 12px; width: 60px; text-align: center; font-size: 24px; line-height: 34px; color: #000; }

/* Right column */
.right { border-left: 2px solid #808080; display: grid; grid-template-rows: 625px 893px; overflow: hidden; }
.props { overflow: hidden; }
.phead { background: linear-gradient(#f8f8f8, #e0e0e0); border-bottom: 2px solid #d4d4d4; }
.props .phead { height: 118px; }
.ptitle { position: relative; height: 50px; padding-top: 10px; text-align: center; font: 22px/30px "Liberation Sans", Arial, sans-serif; padding-right: 39px; }
.gearbtn { position: absolute; right: 5px; top: 8px; width: 56px; height: 32px; border: 2px solid #ababab; border-radius: 8px; background: #f6f6f6; }
.picons { display: flex; align-items: center; gap: 12px; padding-left: 4px; }
.picons.first { gap: 15px; padding: 3px 0 0 216px; }
.blue { color: #3b82f6; }
.form { padding: 0 16px; }
.frow { display: flex; align-items: center; padding-left: 40px; }
.lab { width: 50px; text-align: right; }
.title { height: 34px; margin-top: 20px; }
.field { margin-left: 20px; width: 441px; height: 34px; background: #fff; border: 1px solid #ddd; border-bottom-color: #b0b0b0; padding-left: 6px; line-height: 33px; }
.size { height: 30px; margin-top: 16px; }
.size .lab { margin-right: 19px; }
.locked { padding-left: 40px; margin-top: 9px; }
hr { border: 0; height: 2px; background: #d6d6d6; margin: 18px 1px 0 0; }
h3 { margin: 15px 0 0; font-size: 22px; font-weight: 400; line-height: 30px; }
.form .radio { padding-left: 42px; }
.form h3 + .radio { margin-top: 3px; }
hr.second { margin-top: 44px; }
.choose { display: flex; align-items: center; padding-left: 50px; height: 30px; margin-top: 14px; }
.choose span { width: 175px; }
.show { padding-left: 40px; margin-top: 9px; }
.show2 { padding-left: 40px; gap: 8px; margin-top: 4px; height: 40px; }
.panels { border-top: 3px solid #808080; display: grid; grid-template-rows: 176px 1fr; }
.pi { width: 48px; height: 48px; fill: none; stroke: #6e6e6e; stroke-width: 1.900; overflow: visible; }
.pi.blue { stroke: #3b82f6; }
.panels .picons { margin-top: 4px; }
.panels .row2 { padding-left: 214px; margin-top: 8px; }
.empty { display: flex; align-items: center; justify-content: center; font-size: 25.500px; padding-top: 2px; }

/* Status bar */
.status { display: flex; align-items: center; padding: 2px 0 0 10px; background: linear-gradient(#dadada, #d1d1d1); white-space: nowrap; }
.cmdline { margin-left: 6px; width: 1781px; letter-spacing: .15px; }
.units { width: 105px; }
.popup { width: 138px; height: 32px; border: 2px solid #999; border-radius: 7px; display: flex; align-items: center; justify-content: space-between; padding: 0 7px 0 8px; margin: -2px 30px 0 0; }
.popup svg { color: #888; }
.coord { width: 163px; }
.coord + .coord + .coord { margin-left: 8px; }
```
